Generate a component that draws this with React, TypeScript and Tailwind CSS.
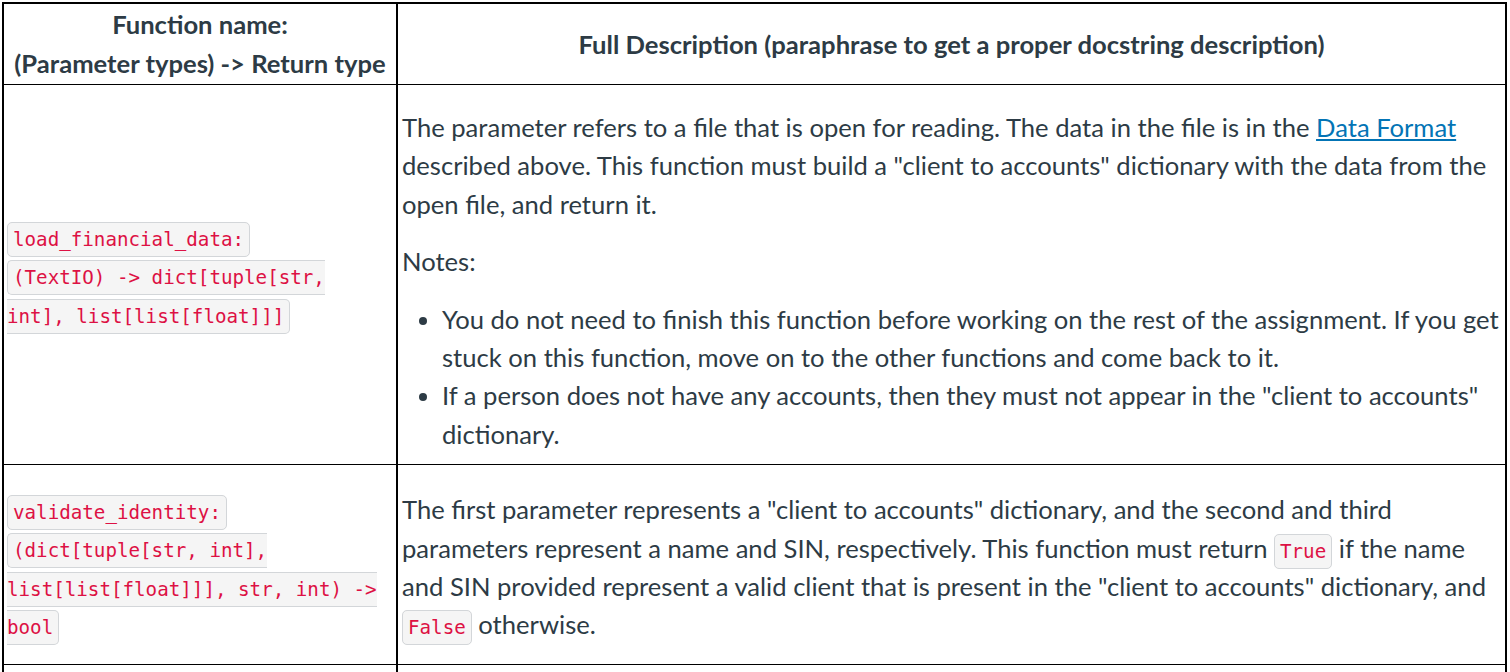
import type { FC, ReactNode } from "react";

const Code: FC<{ children: ReactNode }> = ({ children }) => (
	<code className="rounded-[5px] border border-[#d3d6d9] bg-[#f5f5f5] px-[5px] py-[5px] font-['DejaVu_Sans_Mono',monospace] text-[19.2px] leading-none text-[#dd1144]">
		{children}
	</code>
);

export default function App() {
	return (
		<div className="min-h-screen bg-white font-['Lato',sans-serif] text-[25.6px] leading-[38.4px] text-[#2d3b45]">
			<div className="ml-[2px] mt-[2px] w-[1505px] border-2 border-black">
				{/* header */}
				<div className="grid grid-cols-[392px_1fr] border-b border-black">
					<div className="flex h-[80px] flex-col items-center justify-center font-bold leading-[39px]">
						<span>Function name:</span>
						<span>(Parameter types) -&gt; Return type</span>
					</div>
					<div className="flex items-center justify-center border-l-2 border-black font-bold">
						Full Description (paraphrase to get a proper docstring description)
					</div>
				</div>

				{/* load_financial_data */}
				<div className="grid grid-cols-[392px_1fr] border-b border-black">
					<div className="flex flex-col justify-center pl-[3px] pr-[8px]">
						<div>
							<Code>load_financial_data:</Code>
							<br />
							<Code>(TextIO) -&gt; dict[tuple[str, int], list[list[float]]]</Code>
						</div>
					</div>
					<div className="border-l-2 border-black pb-[11px] pl-[4px] pr-[4px] pt-[23px]">
						<p>
							The parameter refers to a file that is open for reading. The data in the file is in the{" "}
							<a href="#data-format" className="text-[#0374b5] underline">
								Data Format
							</a>{" "}
							described above. This function must build a "client to accounts" dictionary with the data from the open file, and return it.
						</p>
						<p className="mt-[19px]">Notes:</p>
						<ul className="mt-[19px] list-disc pl-[40px]">
							<li>
								You do not need to finish this function before working on the rest of the assignment. If you get stuck on this function, move on to the other functions and come back to it.
							</li>
							<li>
								If a person does not have any accounts, then they must not appear in the "client to accounts" dictionary.
							</li>
						</ul>
					</div>
				</div>

				{/* validate_identity */}
				<div className="grid grid-cols-[392px_1fr] border-b border-black">
					<div className="flex flex-col justify-center pl-[3px] pr-[8px] pt-[4px]">
						<div>
							<Code>validate_identity:</Code>
							<br />
							<Code>(dict[tuple[str, int], list[list[float]]], str, int) -&gt; bool</Code>
						</div>
					</div>
					<div className="border-l-2 border-black pb-[20px] pl-[4px] pr-[4px] pt-[25px]">
						<p>
							The first parameter represents a "client to accounts" dictionary, and the second and third parameters represent a name and SIN, respectively. This function must return <Code>True</Code> if the name and SIN provided represent a valid client that is present in the "client to accounts" dictionary, and <Code>False</Code> otherwise.
						</p>
					</div>
				</div>

				{/* next row, cut off by the viewport */}
				<div className="grid h-[60px] grid-cols-[392px_1fr]">
					<div />
					<div className="border-l-2 border-black" />
				</div>
			</div>
		</div>
	);
}
